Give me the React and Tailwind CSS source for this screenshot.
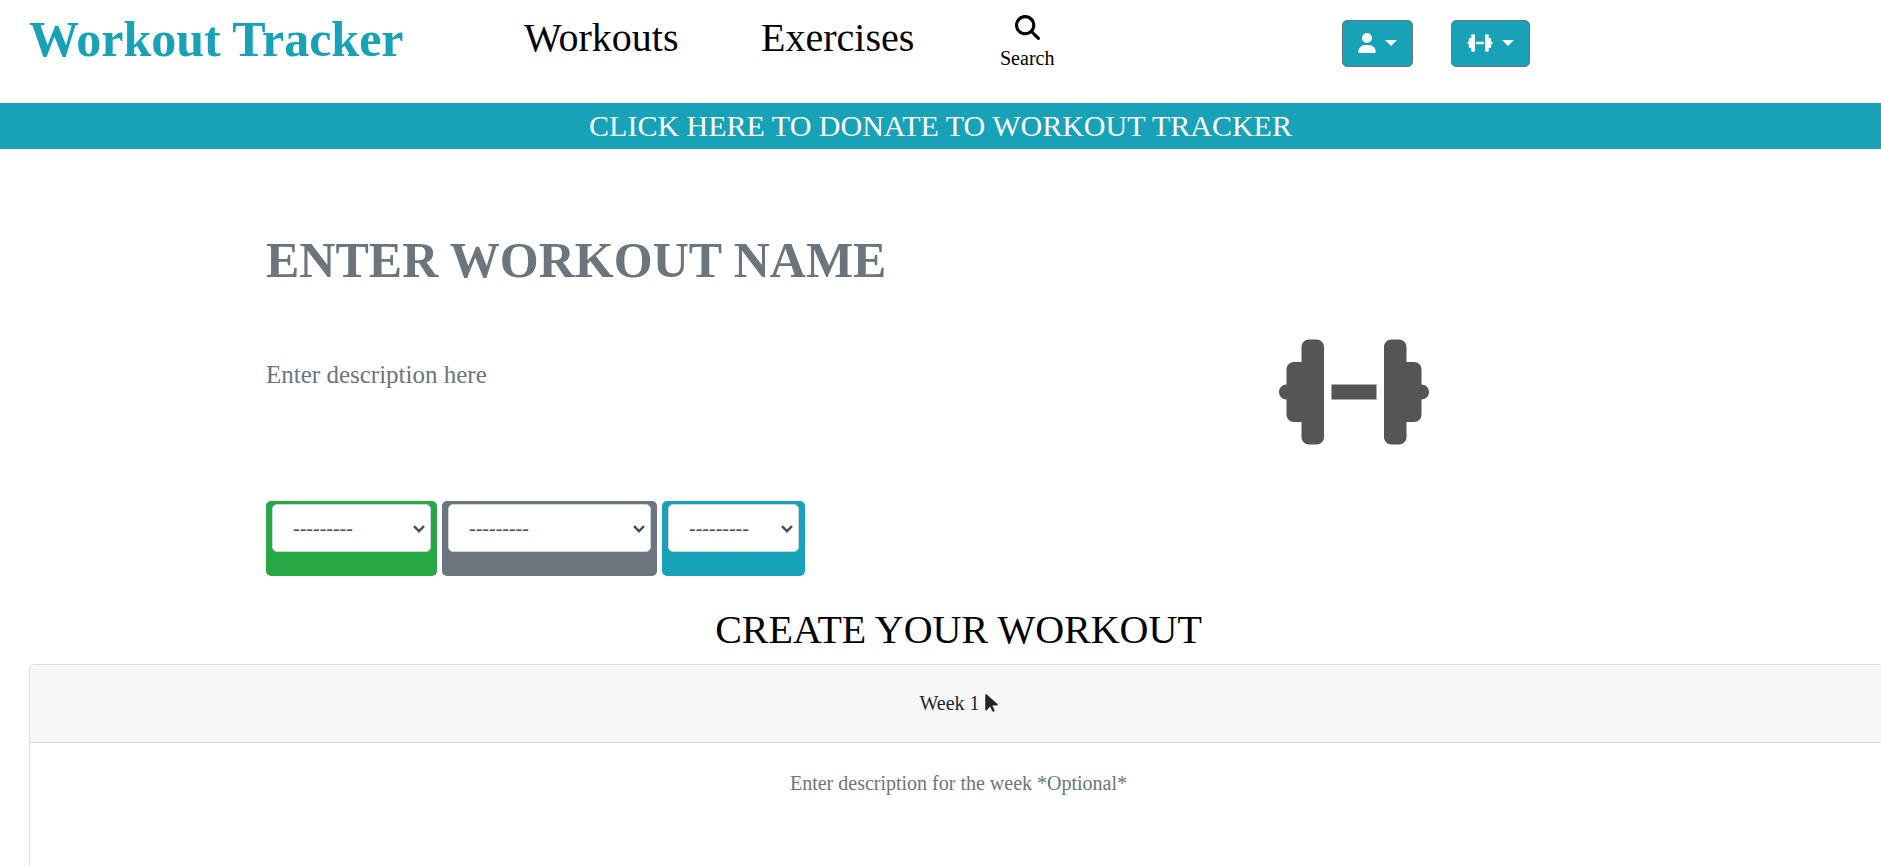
import { FaArrowPointer, FaDumbbell, FaMagnifyingGlass, FaUser } from "react-icons/fa6";

const filters = [
  { label: "Difficulty", box: "w-[171px] bg-[#28a745]" },
  { label: "Category", box: "w-[215px] bg-[#6c757d]" },
  { label: "Length", box: "w-[143px] bg-[#17a2b8]" },
];

function MenuButton({ label, children }) {
  return (
    <button
      type="button"
      aria-label={label}
      className="flex h-[47px] items-center gap-[9px] rounded-[5px] border border-[#6c757d] bg-[#17a2b8] px-[15px] pb-[2px] text-xl text-white"
    >
      {children}
      <svg viewBox="0 0 12 6" className="h-[6px] w-3 fill-current" aria-hidden="true">
        <path d="M0 0h12L6 6z" />
      </svg>
    </button>
  );
}

function Filter({ label, box }) {
  return (
    <label className={`relative block h-[75px] rounded-[5px] px-[6px] pt-[3px] ${box}`}>
      <select
        aria-label={label}
        className="block h-12 w-full appearance-none rounded-[5px] border border-[#ced4da] bg-white px-5 text-xl text-[#495057]"
      >
        <option>---------</option>
      </select>
      <svg
        viewBox="0 0 12 8"
        className="pointer-events-none absolute top-6 right-3 h-2 w-3 fill-none stroke-[#495057]"
        aria-hidden="true"
      >
        <path d="M1 1.2l5 5 5-5" strokeWidth="2.4" />
      </svg>
    </label>
  );
}

export default function App() {
  return (
    <div className="h-screen overflow-hidden bg-white font-['Liberation_Serif','Times_New_Roman',serif] text-[#212529]">
      <header className="flex h-[103px] items-start pl-[29px] text-black">
        <a href="#home" className="w-[495px] pt-[9px] text-[50px] leading-[60px] font-bold text-[#17a2b8]">
          Workout Tracker
        </a>
        <nav className="flex items-start">
          <a href="#workouts" className="w-[237px] pt-2 text-[40px] leading-[60px]">
            Workouts
          </a>
          <a href="#exercises" className="w-[239px] pt-2 text-[40px] leading-[60px]">
            Exercises
          </a>
          <a href="#search" className="flex flex-col items-center pt-[15px] text-xl leading-[30px]">
            <FaMagnifyingGlass className="h-[25px] w-[25px]" />
            <span className="pt-[3px]">Search</span>
          </a>
        </nav>
        <div className="ml-[288px] flex gap-[38px] pt-5">
          <MenuButton label="Account">
            <FaUser className="h-5 w-[18px] shrink-0" />
          </MenuButton>
          <MenuButton label="My workouts">
            <FaDumbbell className="h-5 w-[26px] shrink-0" />
          </MenuButton>
        </div>
      </header>

      <a href="#donate" className="block bg-[#17a2b8] text-center text-[30px] leading-[46px] text-white">
        CLICK HERE TO DONATE TO WORKOUT TRACKER
      </a>

      <main>
        <form>
          <section className="px-[266px] pt-[76px]">
            <input
              aria-label="Workout name"
              placeholder="ENTER WORKOUT NAME"
              className="block h-[70px] w-full text-[50px] font-bold outline-none placeholder:text-[#6c757d]"
            />
            <div className="flex items-start justify-between pt-[37px]">
              <textarea
                aria-label="Workout description"
                placeholder="Enter description here"
                className="mt-6 block h-[120px] w-[720px] resize-none text-[25px] leading-[38px] outline-none placeholder:text-[#6c757d]"
              />
              <FaDumbbell className="mr-[186px] h-[120px] w-[150px] text-[#555555]" />
            </div>
            <div className="flex gap-[5px] pt-[25px]">
              {filters.map((filter) => (
                <Filter key={filter.label} {...filter} />
              ))}
            </div>
          </section>

          <section className="-mr-[7px] ml-[29px] pt-[30px]">
            <h2 className="pb-[10px] text-center text-[40px] leading-[48px] text-black">CREATE YOUR WORKOUT</h2>
            <div className="rounded-[5px] border border-[#dfdfdf]">
              <button
                type="button"
                className="flex h-[78px] w-full items-center justify-center gap-[5px] rounded-t-[4px] border-b border-[#d8d8d8] bg-[#f7f7f7] pb-[2px] text-xl"
              >
                Week 1
                <FaArrowPointer className="h-5 w-[13px]" />
              </button>
              <div className="p-5">
                <textarea
                  aria-label="Week description"
                  placeholder="Enter description for the week *Optional*"
                  className="block h-40 w-full resize-none pt-[5px] text-center text-xl leading-[30px] outline-none placeholder:text-[#6c757d]"
                />
              </div>
            </div>
          </section>
        </form>
      </main>
    </div>
  );
}
